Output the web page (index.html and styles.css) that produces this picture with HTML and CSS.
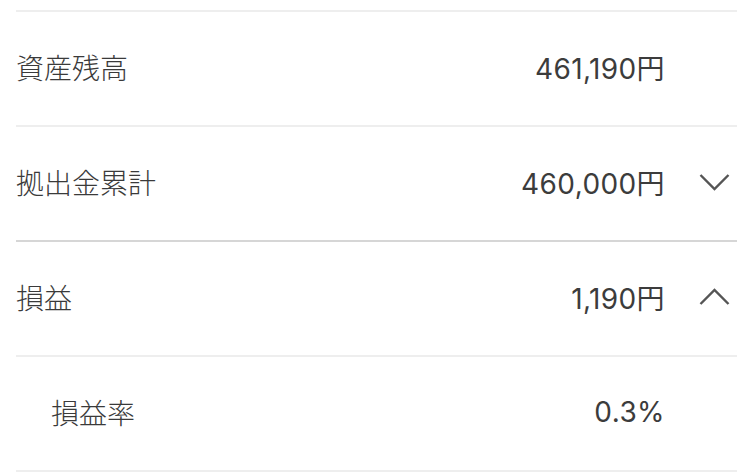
FILE: index.html
```html
<!DOCTYPE html>
<html lang="ja">
<head>
<meta charset="utf-8">
<link rel="stylesheet" href="styles.css">
</head>
<body>
<div class="list">
  <div class="row">
    <span class="label">資産残高</span>
    <span class="value">461,190円</span>
    <span class="icon"></span>
  </div>
  <div class="row row--strong">
    <span class="label">拠出金累計</span>
    <span class="value">460,000円</span>
    <span class="icon">
      <svg width="31" height="18" viewBox="0 0 31 18"><polyline points="1.5,2 15.5,16 29.5,2" fill="none" stroke="#555" stroke-width="2.4"/></svg>
    </span>
  </div>
  <div class="row">
    <span class="label">損益</span>
    <span class="value">1,190円</span>
    <span class="icon">
      <svg width="31" height="18" viewBox="0 0 31 18"><polyline points="1.5,16 15.5,2 29.5,16" fill="none" stroke="#555" stroke-width="2.4"/></svg>
    </span>
  </div>
  <div class="row row--sub">
    <span class="label">損益率</span>
    <span class="value">0.3%</span>
    <span class="icon"></span>
  </div>
</div>
</body>
</html>
```
FILE: styles.css
```css
html, body {
  margin: 0;
  padding: 0;
  background: #ffffff;
}
body {
  font-family: "Liberation Sans", "Noto Sans CJK JP", sans-serif;
  color: #3a3a3a;
}
.list {
  padding: 10px 13px 0 16px;
}
.row {
  display: flex;
  align-items: center;
  height: 109px;
  padding-bottom: 4px;
  border-bottom: 2px solid #eeeeee;
  font-size: 28px;
}
.row:first-child {
  border-top: 2px solid #eeeeee;
}
.row--strong {
  border-bottom-color: #d6d6d6;
}
.label {
  flex: 1;
  font-family: "Noto Sans CJK JP", sans-serif;
  font-weight: 300;
}
.row--sub .label {
  padding-left: 35px;
}
.value {
  font-family: "Inter", "Noto Sans CJK JP", sans-serif;
  font-weight: 400;
  letter-spacing: 0.4px;
  color: #3c3c3c;
}
.icon {
  width: 72px;
  display: flex;
  justify-content: flex-end;
  padding-right: 7px;
  box-sizing: border-box;
}
.icon svg {
  display: block;
}
```
